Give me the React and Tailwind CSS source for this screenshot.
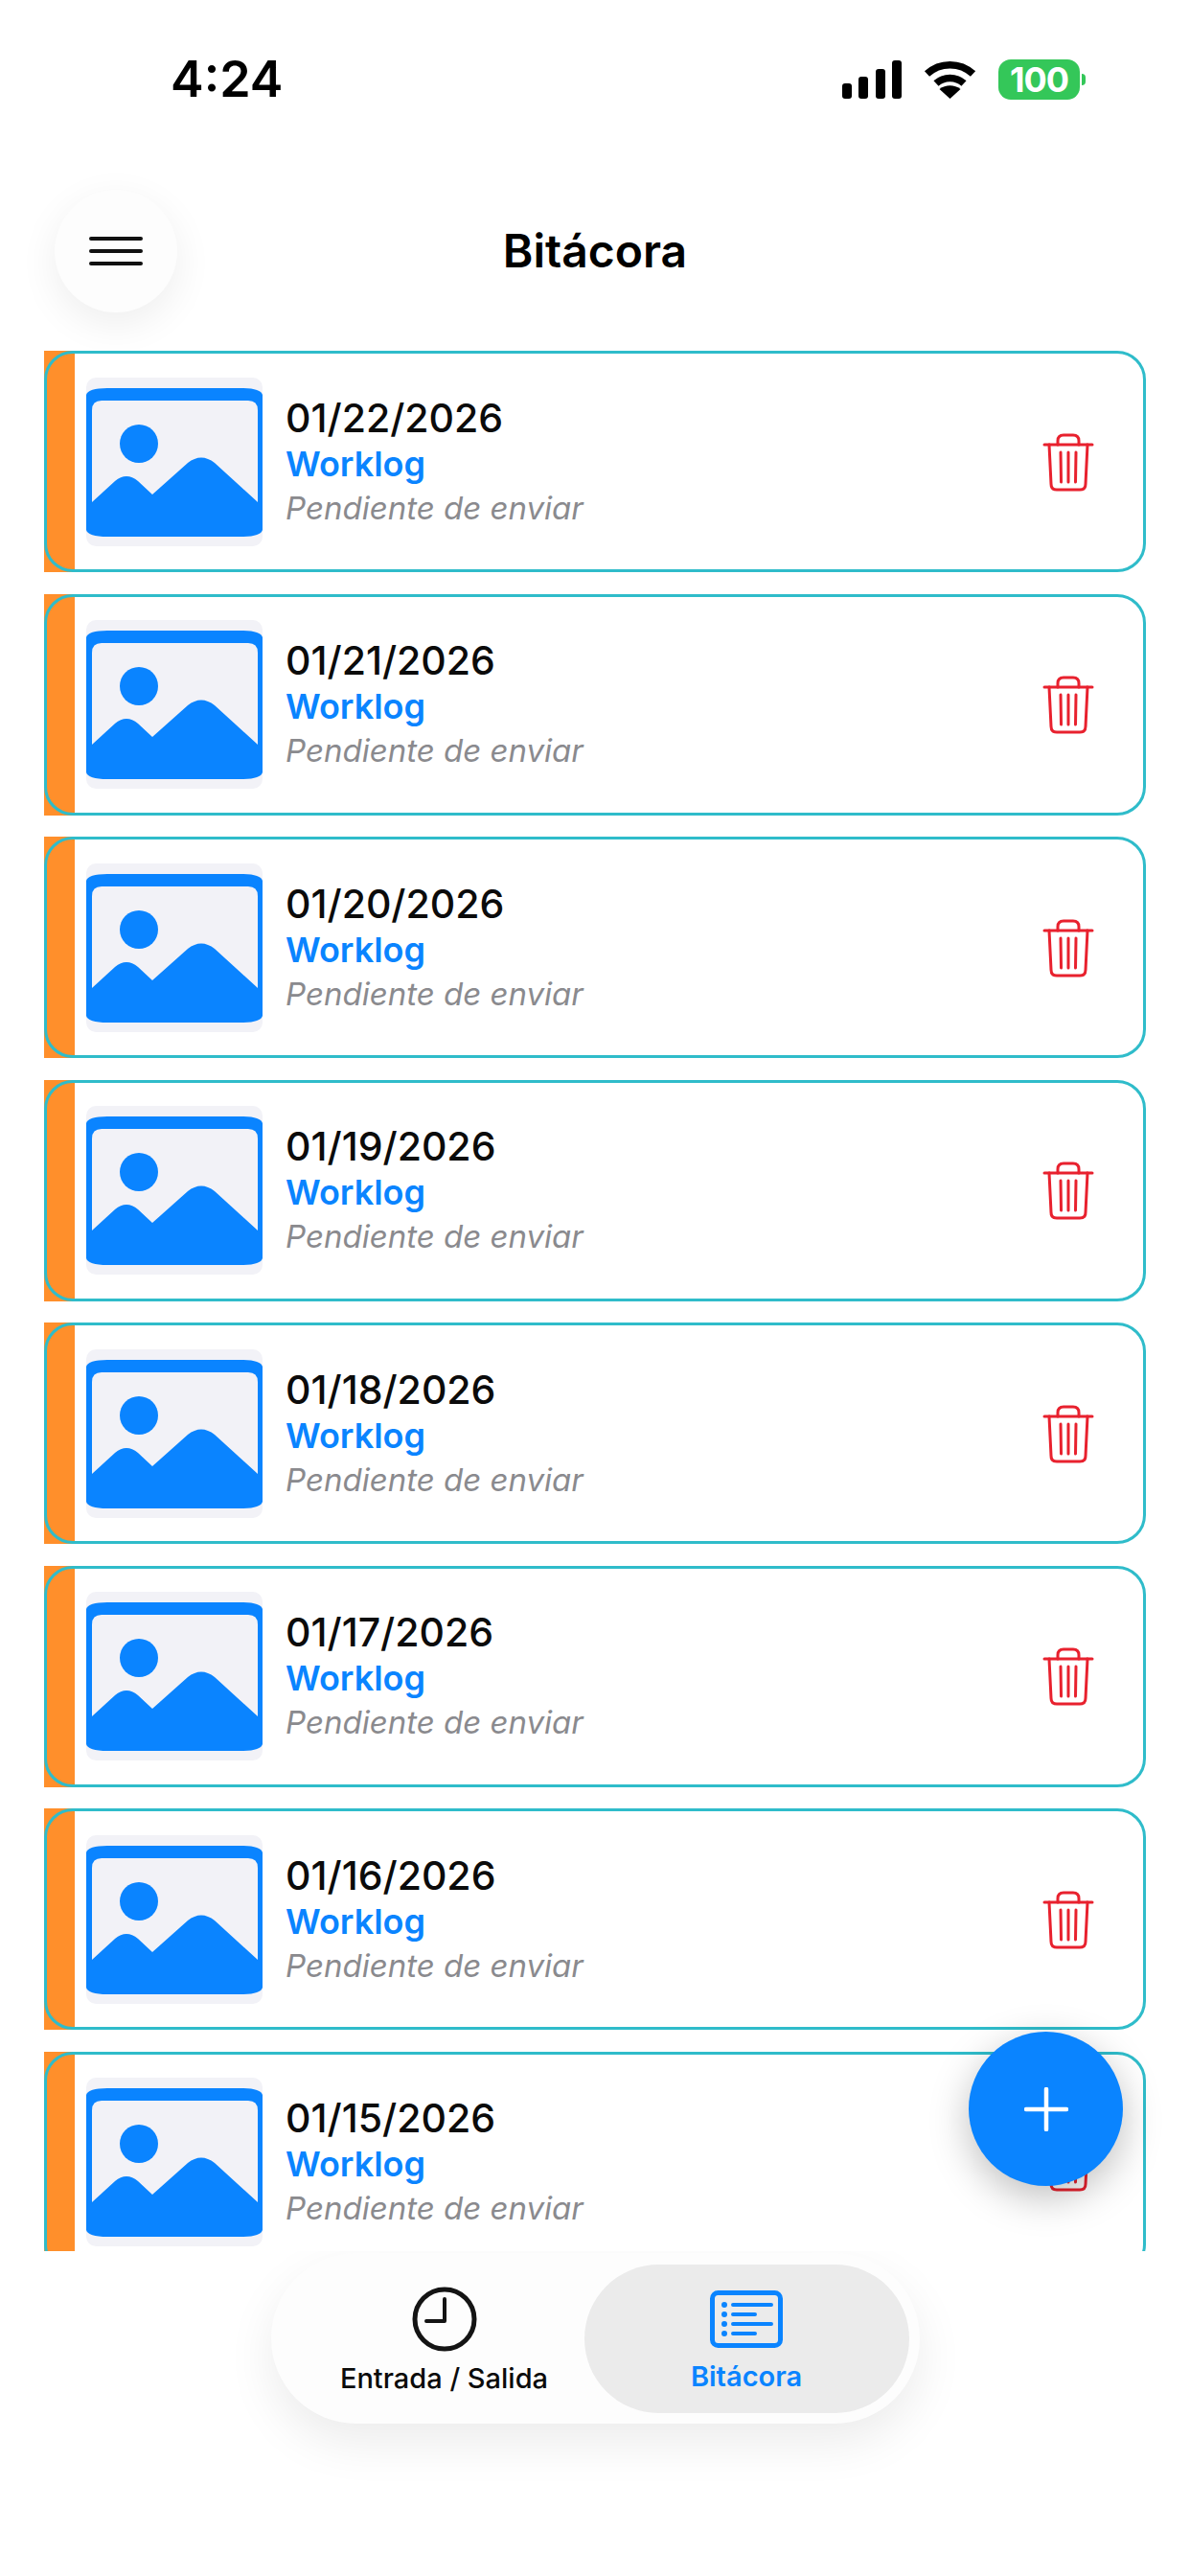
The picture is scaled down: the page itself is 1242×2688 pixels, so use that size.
const dates = ["01/22/2026", "01/21/2026", "01/20/2026", "01/19/2026", "01/18/2026", "01/17/2026", "01/16/2026", "01/15/2026"];

const PhotoIcon = () => (
  <svg width="184" height="176" viewBox="0 0 184 176" className="rounded-[10px] bg-[#f2f2f7] shrink-0">
    <path d="M0 18 Q2 11 22 11 H162 Q182 11 184 18 V159 Q182 166 162 166 H22 Q2 166 0 159 Z" fill="#0a84ff" />
    <path d="M6 34 Q6 24 16 24 H169 Q179 24 179 34 V135 H6 Z" fill="#f2f2f7" />
    <circle cx="55" cy="69" r="20" fill="#0a84ff" />
    <path d="M6 130 L30 108 Q42 98 54 108 L69 122 L106 89 Q120 78 134 89 L179 130 V140 H6 Z" fill="#0a84ff" />
  </svg>
);

const TrashIcon = () => (
  <svg width="54" height="62" viewBox="-1 -1 54 62" fill="none" stroke="#e8212e" strokeWidth="3" strokeLinecap="round" strokeLinejoin="round">
    <path d="M1 12 H51" />
    <path d="M15 12 V8 Q15 2 21 2 H31 Q37 2 37 8 V12" />
    <path d="M6 12 L8 53 Q8 59 14 59 H38 Q44 59 44 53 L46 12" />
    <path d="M18 20 L18.5 51 M26 20 V51 M34 20 L33.5 51" />
  </svg>
);

const Row = ({ date }) => (
  <div className="relative flex h-[231px] shrink-0">
    <div className="w-[32px] shrink-0 bg-[#ff8f2b]" />
    <div className="flex flex-1 items-center pl-[12px] pr-[54px]">
      <PhotoIcon />
      <div className="ml-[24px] flex flex-1 flex-col">
        <span className="text-[41px] leading-[50px] font-medium text-[#0b0b0b]">{date}</span>
        <span className="text-[36px] leading-[46px] font-semibold text-[#0a84ff]">Worklog</span>
        <span className="text-[33px] leading-[46px] italic text-[#8a8a8e]">Pendiente de enviar</span>
      </div>
      <TrashIcon />
    </div>
    <div className="absolute inset-0 rounded-[30px] border-[3px] border-[#2fbcca]" />
  </div>
);

export default function App() {
  return (
    <div className="relative flex h-[2688px] w-[1242px] flex-col overflow-hidden bg-white font-['Inter',sans-serif]">
      {/* status bar */}
      <div className="flex h-[166px] shrink-0 items-center justify-between pl-[178px] pr-[109px]">
        <span className="text-[52px] font-semibold text-black">4:24</span>
        <div className="flex items-center gap-[23px]">
          <svg width="62" height="40" viewBox="0 0 62 40" fill="#000">
            <rect x="0" y="24" width="10" height="16" rx="3" />
            <rect x="17" y="17" width="10" height="23" rx="3" />
            <rect x="35" y="9" width="10" height="31" rx="3" />
            <rect x="52" y="0" width="10" height="40" rx="3" />
          </svg>
          <svg width="55" height="40" viewBox="0 0 55 40" fill="none" stroke="#000" strokeWidth="7.5">
            <path d="M3.5 14 C17 1.5 38 1.5 51.5 14" />
            <path d="M13 24 C21 16.5 34 16.5 42 24" />
            <path d="M27.5 40 L16.5 30 C23 25 32 25 38.5 30 Z" fill="#000" stroke="none" />
          </svg>
          <div className="flex items-center gap-[2px]">
            <div className="flex h-[42px] w-[85px] items-center justify-center rounded-[13px] bg-[#34c759] text-[36px] font-bold tracking-[-1px] text-white">100</div>
            <div className="h-[12px] w-[4px] rounded-r-[4px] bg-[#34c759]" />
          </div>
        </div>
      </div>

      {/* header */}
      <div className="relative flex h-[200px] shrink-0 items-center justify-center pb-[8px]">
        <div className="absolute left-[57px] top-[32px] flex h-[128px] w-[128px] flex-col items-center justify-center gap-[9px] rounded-full bg-[#fdfdfd] shadow-[0_12px_40px_rgba(0,0,0,0.07)]">
          <div className="h-[4px] w-[56px] rounded-full bg-[#111]" />
          <div className="h-[4px] w-[56px] rounded-full bg-[#111]" />
          <div className="h-[4px] w-[56px] rounded-full bg-[#111]" />
        </div>
        <h1 className="text-[48px] font-semibold text-black">Bitácora</h1>
      </div>

      {/* list */}
      <div className="mx-[46px] flex h-[1983px] shrink-0 flex-col gap-[22.5px] overflow-hidden">
        {dates.map((date) => (
          <Row key={date} date={date} />
        ))}
      </div>

      {/* add button */}
      <div className="absolute left-[1011px] top-[2120px] flex h-[161px] w-[161px] items-center justify-center rounded-full bg-[#0a84ff] shadow-[0_12px_40px_rgba(0,0,0,0.25)]">
        <svg width="46" height="46" viewBox="0 0 46 46" stroke="#fff" strokeWidth="4.5" strokeLinecap="round">
          <path d="M23 2 V44 M2 23 H44" />
        </svg>
      </div>

      {/* tab bar */}
      <div className="flex h-[241px] shrink-0 justify-center overflow-hidden pt-[2px]">
        <div className="flex h-[178px] w-[677px] items-center rounded-full bg-[#fdfdfd] pl-[35px] pr-[11px] shadow-[0_20px_50px_rgba(0,0,0,0.08)]">
          <div className="flex w-[292px] flex-col items-center gap-[10px] pt-[6px]">
            <svg width="68" height="68" viewBox="0 0 68 68" fill="none" stroke="#141414" strokeWidth="5">
              <circle cx="34" cy="34" r="31" />
              <path d="M34 13 V36 H15" strokeWidth="4" strokeLinecap="round" strokeLinejoin="round" />
            </svg>
            <span className="text-[29px] leading-[36px] font-medium text-[#0b0b0b]">Entrada / Salida</span>
          </div>
          <div className="flex h-[155px] w-[339px] flex-col items-center justify-center gap-[12px] rounded-full bg-[#ebebeb] pt-[8px]">
            <svg width="76" height="60" viewBox="0 0 76 60" fill="none" stroke="#0a84ff" strokeWidth="4" strokeLinecap="round">
              <rect x="2.5" y="2.5" width="71" height="55" rx="6" strokeWidth="5" />
              <path d="M24 15 H64 M24 25 H47 M24 35 H64 M24 45 H47" />
              <path d="M15 15 V15.01 M15 25 V25.01 M15 35 V35.01 M15 45 V45.01" strokeWidth="6" />
            </svg>
            <span className="text-[29px] leading-[36px] font-semibold text-[#0a84ff]">Bitácora</span>
          </div>
        </div>
      </div>
    </div>
  );
}
